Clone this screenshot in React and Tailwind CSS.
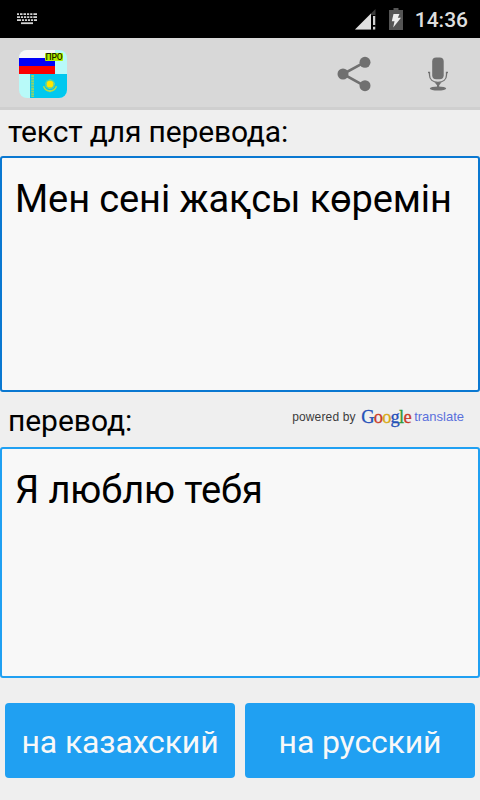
function KeyboardIcon() {
  return (
    <svg width="20" height="12" viewBox="0 0 20 12" fill="none" stroke="#d4d4d4" strokeWidth="1.8">
      <path d="M0 1.1H20" strokeDasharray="2 1 2.5 1 2.5 1 2.2 1 2.2 1 3.6 1" />
      <path d="M0 4.2H20" strokeDasharray="3 0.9 2.2 0.9 2.2 0.9 2.2 0.9 2.2 0.9 3.7 1" />
      <path d="M0 7.2H20" strokeDasharray="4 0.9 2.1 0.9 2.1 0.9 2.1 0.9 2.1 0.9 3.2 1" />
      <path d="M4 10.2H16" />
    </svg>
  );
}

function SignalIcon() {
  return (
    <svg width="21" height="21" viewBox="0 0 21 21">
      <path d="M20.5 0V20.5H0Z" fill="#3c3c3c" />
      <path d="M16 4.5V20.5H0Z" fill="#e0e0e0" />
      <path d="M16 6H20.5V20.5H16Z" fill="#000" />
      <path d="M18 7H20.2V16H18ZM18 17.8H20.2V20.5H18Z" fill="#d0d0d0" />
    </svg>
  );
}

function BatteryIcon() {
  return (
    <svg width="14" height="22" viewBox="0 0 14 22">
      <path d="M4.5 0H9.5V2H14V22H0V2H4.5Z" fill="#555" />
      <path d="M4.5 6H10.5L8.8 9.8H12L4.2 19.5L5.5 13.3H2.8Z" fill="#eee" />
    </svg>
  );
}

function AppIcon() {
  return (
    <svg width="48" height="48" viewBox="0 0 48 48">
      <defs>
        <clipPath id="icon">
          <rect width="48" height="48" rx="8" />
        </clipPath>
      </defs>
      <g clipPath="url(#icon)">
        <path fill="#b8faf9" d="M0 0H48V48H0Z" />
        <path fill="#f8f8f8" d="M0 0H36V8H0Z" />
        <path fill="#0000f8" d="M0 8H36V16H0Z" />
        <path fill="#fa0000" d="M0 16H36V24H0Z" />
        <path fill="#00c8ef" d="M11 24H48V48H11Z" />
        <path d="M13.6 25V47" stroke="#8fd46a" strokeWidth="2.8" strokeDasharray="2 0.6" />
        <circle cx="31" cy="34.2" r="4.2" fill="none" stroke="#a8dc58" strokeWidth="1.4" strokeDasharray="0.8 0.5" />
        <circle cx="31" cy="34.2" r="3.4" fill="#ffe600" />
        <path d="M24.5 36.2C26 39.8 28.5 41 31 41C33.5 41 36 39.8 37.5 36.2" fill="none" stroke="#b9de3c" strokeWidth="1.5" />
        <path d="M28.5 40L31 42.5L33.5 40Z" fill="#a8dc58" />
        <rect x="26" y="3" width="18" height="8" rx="1" fill="#b2f000" />
      </g>
      <text x="26.5" y="10" fontSize="8.5" fontWeight="500" fontFamily="Roboto, sans-serif" textLength="17" fill="#1a2400">
        ПРО
      </text>
    </svg>
  );
}

function ShareIcon() {
  return (
    <svg width="34" height="36" viewBox="0 0 34 36" fill="#707070">
      <path d="M27.5 6.3L6 18L27.5 29.8" fill="none" stroke="#707070" strokeWidth="2.6" />
      <circle cx="28" cy="6.3" r="5.5" />
      <circle cx="6" cy="18" r="5.5" />
      <circle cx="28" cy="29.7" r="5.5" />
    </svg>
  );
}

function MicIcon() {
  return (
    <svg width="22" height="34" viewBox="0 0 22 34" fill="#707070">
      <rect x="5.2" y="0.5" width="11.5" height="21.8" rx="4" />
      <path d="M1 15.5H2.5V18C2.5 22.5 6 25.3 11 25.3S19.5 22.5 19.5 18V15.5H21" fill="none" stroke="#707070" strokeWidth="1.3" />
      <path d="M7.5 25.3H14.5L12.2 28.3V30H10V28.3Z" />
      <ellipse cx="11" cy="31.5" rx="8.2" ry="2.1" />
    </svg>
  );
}

function StatusBar() {
  return (
    <div className="flex h-[38px] items-center bg-black pl-[17px] pr-3">
      <KeyboardIcon />
      <div className="ml-auto flex items-center">
        <SignalIcon />
        <div className="ml-[13px] pb-px">
          <BatteryIcon />
        </div>
        <span className="ml-3 pt-[3px] text-[21px] font-medium leading-none text-[#dedede]">14:36</span>
      </div>
    </div>
  );
}

function ActionBar() {
  return (
    <header className="flex h-[72px] items-center border-b-[3px] border-[#cfcfcf] bg-[#d8d8d8] pl-[19px] pr-[31px] pt-[3px]">
      <AppIcon />
      <button className="ml-auto" aria-label="Поделиться">
        <ShareIcon />
      </button>
      <button className="ml-14" aria-label="Микрофон">
        <MicIcon />
      </button>
    </header>
  );
}

function PoweredBy() {
  return (
    <div className="flex items-start font-['Liberation_Sans',sans-serif] text-xs leading-6">
      <span className="w-[69px] tracking-[0.15px] text-[#3c3c3c]">powered by</span>
      <span className="w-[53px] font-['Liberation_Serif',serif] text-[18.5px] tracking-[-0.8px] [-webkit-text-stroke-width:0.3px]">
        <span className="text-[#2450b8]">G</span>
        <span className="text-[#c83a28]">o</span>
        <span className="text-[#d8aa14]">o</span>
        <span className="text-[#2450b8]">g</span>
        <span className="text-[#2f9a38]">l</span>
        <span className="text-[#c83a28]">e</span>
      </span>
      <span className="text-[13px] text-[#5a6fdc]">translate</span>
    </div>
  );
}

export default function App() {
  return (
    <div className="flex h-[800px] w-[480px] flex-col overflow-hidden bg-[#efefef] font-[Roboto,sans-serif] text-black">
      <StatusBar />
      <ActionBar />
      <div className="h-[46px] pl-2 text-[30px] leading-[44px] tracking-[-0.15px]">текст для перевода:</div>
      <div className="h-[236px] rounded-[3px] border-2 border-[#0a78d1] bg-[#f8f8f8] px-[13px] pt-[18px] text-[38px] leading-[46px] tracking-[-0.1px]">
        Мен сені жақсы көремін
      </div>
      <div className="flex h-[55px] justify-between pl-2 pr-4">
        <span className="text-[30px] leading-[58px] tracking-[-0.05px]">перевод:</span>
        <div className="pt-[13px]">
          <PoweredBy />
        </div>
      </div>
      <div className="h-[231px] rounded-[3px] border-2 border-[#20a0f2] bg-[#f8f8f8] px-[13px] pt-[18px] text-[38px] leading-[46px] tracking-[-0.1px]">
        Я люблю тебя
      </div>
      <div className="mt-[25px] grid h-[75px] grid-cols-2 gap-2.5 px-[5px] text-[32px] tracking-[-0.15px] text-[#f8f8f8]">
        <button className="rounded-[4px] bg-[#20a0f2] pt-0.5">на казахский</button>
        <button className="rounded-[4px] bg-[#20a0f2] pt-0.5">на русский</button>
      </div>
    </div>
  );
}
